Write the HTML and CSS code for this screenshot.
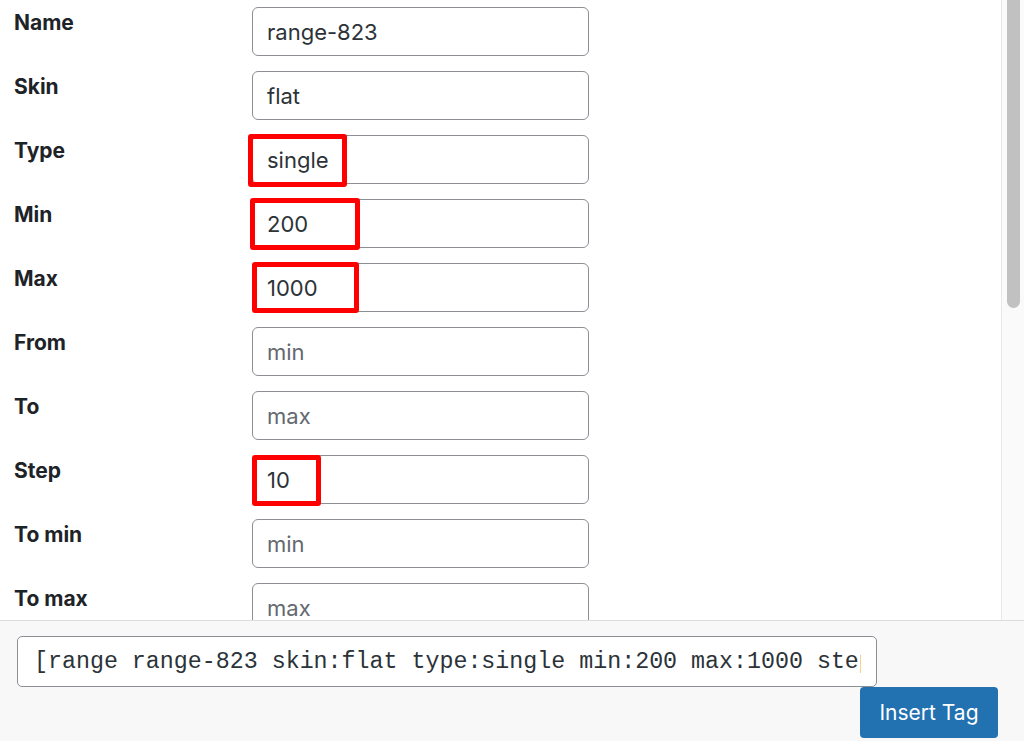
FILE: index.html
```html
<!DOCTYPE html>
<html lang="en">
<head>
    <meta charset="UTF-8">
    <title>Range Tag Generator</title>
    <link rel="stylesheet" href="styles.css">
</head>
<body>

<div class="panel">
    <div class="fields">
        <div class="row">
            <label class="label">Name</label>
            <div class="field"><input class="text" type="text" value="range-823"></div>
        </div>
        <div class="row">
            <label class="label">Skin</label>
            <div class="field"><input class="text" type="text" value="flat"></div>
        </div>
        <div class="row">
            <label class="label">Type</label>
            <div class="field">
                <input class="text" type="text" value="single">
                <span class="mark mark-type"></span>
            </div>
        </div>
        <div class="row">
            <label class="label">Min</label>
            <div class="field">
                <input class="text" type="text" value="200">
                <span class="mark mark-min"></span>
            </div>
        </div>
        <div class="row">
            <label class="label">Max</label>
            <div class="field">
                <input class="text" type="text" value="1000">
                <span class="mark mark-max"></span>
            </div>
        </div>
        <div class="row">
            <label class="label">From</label>
            <div class="field"><input class="text" type="text" placeholder="min"></div>
        </div>
        <div class="row">
            <label class="label">To</label>
            <div class="field"><input class="text" type="text" placeholder="max"></div>
        </div>
        <div class="row">
            <label class="label">Step</label>
            <div class="field">
                <input class="text" type="text" value="10">
                <span class="mark mark-step"></span>
            </div>
        </div>
        <div class="row">
            <label class="label">To min</label>
            <div class="field"><input class="text" type="text" placeholder="min"></div>
        </div>
        <div class="row">
            <label class="label">To max</label>
            <div class="field"><input class="text" type="text" placeholder="max"></div>
        </div>
    </div>
    <div class="scrollbar"><div class="thumb"></div></div>
</div>

<footer class="insert-box">
    <input class="code" type="text" readonly value="[range range-823 skin:flat type:single min:200 max:1000 step:10]">
    <div class="actions">
        <button class="button-primary">Insert Tag</button>
    </div>
</footer>

</body>
</html>
```

FILE: styles.css
```css
body {
    margin: 0;
    padding: 0;
    width: 1024px;
    height: 741px;
    overflow: hidden;
    background: #fff;
    font-family: Inter, "Noto Sans", sans-serif;
    color: #1d2327;
}

.panel {
    display: flex;
    height: 620px;
    overflow: hidden;
    border-bottom: 1px solid #dcdcde;
}

.fields {
    flex: 1;
    padding-top: 7px;
}

.row {
    display: flex;
    height: 64px;
}

.label {
    width: 238px;
    padding-left: 14px;
    padding-top: 4px;
    font-size: 21px;
    font-weight: 700;
    line-height: 24px;
}

.field {
    position: relative;
    width: 337px;
}

.text {
    box-sizing: border-box;
    width: 337px;
    height: 49px;
    margin: 0;
    padding: 1px 14px 0;
    border: 1px solid #8c8f94;
    border-radius: 6px;
    font-family: Inter, "Noto Sans", sans-serif;
    font-size: 22px;
    color: #2c3338;
    background: #fff;
    outline: none;
}

.text::placeholder {
    color: #646970;
}

/* red highlight boxes drawn over the filled values */
.mark {
    position: absolute;
    box-sizing: border-box;
    border: 5px solid #ff0000;
    border-radius: 3px;
    pointer-events: none;
}

.mark-type {
    left: -4px;
    top: -1px;
    width: 99px;
    height: 53px;
}

.mark-min {
    left: -2px;
    top: -1px;
    width: 110px;
    height: 52px;
}

.mark-max {
    left: 0;
    top: -1px;
    width: 107px;
    height: 51px;
}

.mark-step {
    left: 0;
    top: 0;
    width: 69px;
    height: 51px;
}

.scrollbar {
    width: 22px;
    border-left: 1px solid #e8e8e8;
    background: #fafafa;
    display: flex;
    justify-content: center;
}

.thumb {
    width: 13px;
    height: 308px;
    background: #c1c1c1;
    border-radius: 0 0 7px 7px;
}

.insert-box {
    background: #f8f8f8;
    height: 120px;
    padding: 15px 147px 0 17px;
}

.code {
    box-sizing: border-box;
    width: 860px;
    height: 51px;
    margin: 0;
    padding: 0 15px 0 16px;
    border: 1px solid #8c8f94;
    border-radius: 5px;
    background: #fff;
    font-family: "Liberation Mono", "DejaVu Sans Mono", monospace;
    font-size: 23.3px;
    color: #2c3338;
    outline: none;
}

.actions {
    display: flex;
    justify-content: flex-end;
    margin-right: -121px;
}

.button-primary {
    width: 138px;
    height: 51px;
    border: none;
    border-radius: 4px;
    background: #2271b1;
    color: #fff;
    font-family: Inter, "Noto Sans", sans-serif;
    font-size: 21px;
    cursor: pointer;
}
```
